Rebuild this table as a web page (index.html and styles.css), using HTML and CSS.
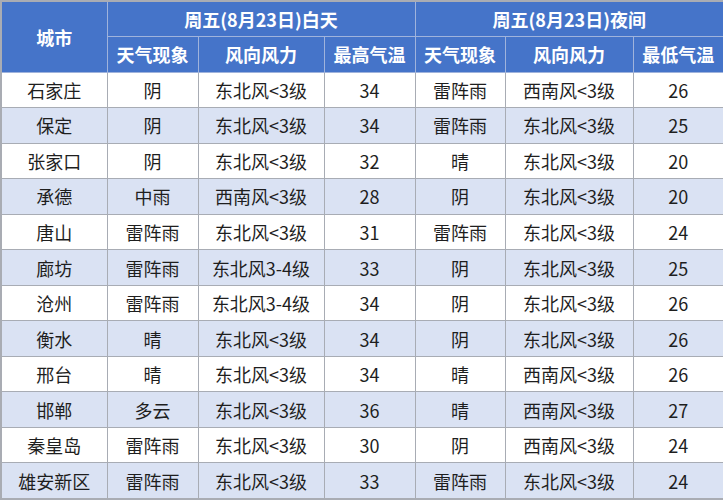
FILE: index.html
```html
<!DOCTYPE html>
<html lang="zh">
<head>
<meta charset="utf-8">
<link rel="stylesheet" href="styles.css">
</head>
<body>
<table class="weather">
<colgroup>
<col class="c1"><col class="c2"><col class="c3"><col class="c4"><col class="c5"><col class="c6"><col class="c7">
</colgroup>
<thead>
<tr class="h1"><th rowspan="2">城市</th><th colspan="3">周五(8月23日)白天</th><th colspan="3">周五(8月23日)夜间</th></tr>
<tr class="h2"><th>天气现象</th><th>风向风力</th><th>最高气温</th><th>天气现象</th><th>风向风力</th><th>最低气温</th></tr>
</thead>
<tbody>
<tr><td>石家庄</td><td>阴</td><td>东北风&lt;3级</td><td>34</td><td>雷阵雨</td><td>西南风&lt;3级</td><td>26</td></tr>
<tr><td>保定</td><td>阴</td><td>东北风&lt;3级</td><td>34</td><td>雷阵雨</td><td>东北风&lt;3级</td><td>25</td></tr>
<tr><td>张家口</td><td>阴</td><td>东北风&lt;3级</td><td>32</td><td>晴</td><td>东北风&lt;3级</td><td>20</td></tr>
<tr><td>承德</td><td>中雨</td><td>西南风&lt;3级</td><td>28</td><td>阴</td><td>东北风&lt;3级</td><td>20</td></tr>
<tr><td>唐山</td><td>雷阵雨</td><td>东北风&lt;3级</td><td>31</td><td>雷阵雨</td><td>东北风&lt;3级</td><td>24</td></tr>
<tr><td>廊坊</td><td>雷阵雨</td><td>东北风3-4级</td><td>33</td><td>阴</td><td>东北风&lt;3级</td><td>25</td></tr>
<tr><td>沧州</td><td>雷阵雨</td><td>东北风3-4级</td><td>34</td><td>阴</td><td>东北风&lt;3级</td><td>26</td></tr>
<tr><td>衡水</td><td>晴</td><td>东北风&lt;3级</td><td>34</td><td>阴</td><td>东北风&lt;3级</td><td>26</td></tr>
<tr><td>邢台</td><td>晴</td><td>东北风&lt;3级</td><td>34</td><td>晴</td><td>西南风&lt;3级</td><td>26</td></tr>
<tr><td>邯郸</td><td>多云</td><td>东北风&lt;3级</td><td>36</td><td>晴</td><td>西南风&lt;3级</td><td>27</td></tr>
<tr><td>秦皇岛</td><td>雷阵雨</td><td>东北风&lt;3级</td><td>30</td><td>阴</td><td>西南风&lt;3级</td><td>24</td></tr>
<tr><td>雄安新区</td><td>雷阵雨</td><td>东北风&lt;3级</td><td>33</td><td>雷阵雨</td><td>东北风&lt;3级</td><td>24</td></tr>
</tbody>
</table>
</body>
</html>
```
FILE: styles.css
```css
html, body {
  margin: 0;
  padding: 0;
  background: #ffffff;
}
.weather {
  width: 723px;
  height: 500px;
  border-collapse: collapse;
  table-layout: fixed;
  font-family: "Noto Sans CJK SC", "Noto Sans", sans-serif;
  font-size: 18px;
  color: #1e1e1e;
  border: 2px solid #a9acb3;
}
.c1 { width: 106px; }
.c2 { width: 91px; }
.c3 { width: 126px; }
.c4 { width: 91px; }
.c5 { width: 90px; }
.c6 { width: 128px; }
.c7 { width: 91px; }
.weather th {
  background: #4574c9;
  color: #ffffff;
  font-weight: 700;
  border: 1px solid #9fb3dc;
  height: 34.3px;
  padding: 0;
  text-align: center;
  vertical-align: middle;
  line-height: 1;
}
.weather td {
  border: 1px solid #a8acb4;
  height: 34.3px;
  padding: 0;
  text-align: center;
  vertical-align: middle;
  line-height: 1;
}
.weather tbody tr:nth-child(even) td {
  background: #dae2f3;
}
.weather tbody tr:nth-child(odd) td {
  background: #ffffff;
}
```
